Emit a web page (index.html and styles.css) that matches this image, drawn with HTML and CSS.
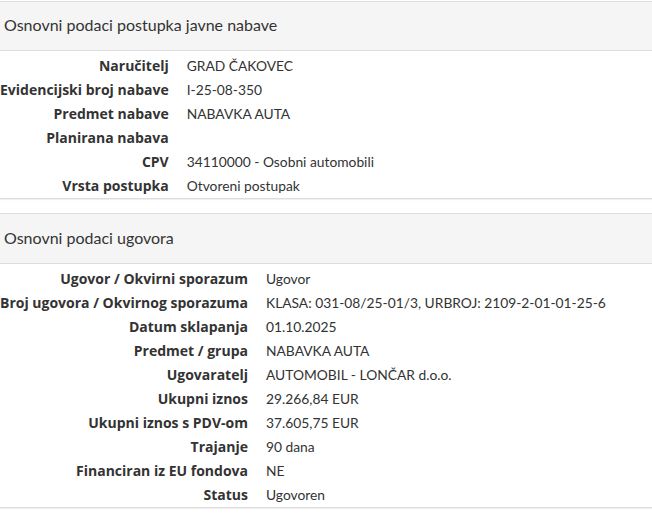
FILE: index.html
```html
<!DOCTYPE html>
<html lang="hr">
<head>
<meta charset="utf-8">
<title>Osnovni podaci</title>
<link rel="stylesheet" href="styles.css">
</head>
<body>
<section class="panel">
  <div class="panel-heading">Osnovni podaci postupka javne nabave</div>
  <table class="details">
    <tr><th>Naručitelj</th><td>GRAD ČAKOVEC</td></tr>
    <tr><th>Evidencijski broj nabave</th><td>I-25-08-350</td></tr>
    <tr><th>Predmet nabave</th><td>NABAVKA AUTA</td></tr>
    <tr><th>Planirana nabava</th><td></td></tr>
    <tr><th>CPV</th><td>34110000 - Osobni automobili</td></tr>
    <tr><th>Vrsta postupka</th><td>Otvoreni postupak</td></tr>
  </table>
</section>
<section class="panel">
  <div class="panel-heading">Osnovni podaci ugovora</div>
  <table class="details">
    <tr><th>Ugovor / Okvirni sporazum</th><td>Ugovor</td></tr>
    <tr><th>Broj ugovora / Okvirnog sporazuma</th><td>KLASA: 031-08/25-01/3, URBROJ: 2109-2-01-01-25-6</td></tr>
    <tr><th>Datum sklapanja</th><td>01.10.2025</td></tr>
    <tr><th>Predmet / grupa</th><td>NABAVKA AUTA</td></tr>
    <tr><th>Ugovaratelj</th><td>AUTOMOBIL - LONČAR d.o.o.</td></tr>
    <tr><th>Ukupni iznos</th><td>29.266,84 EUR</td></tr>
    <tr><th>Ukupni iznos s PDV-om</th><td>37.605,75 EUR</td></tr>
    <tr><th>Trajanje</th><td>90 dana</td></tr>
    <tr><th>Financiran iz EU fondova</th><td>NE</td></tr>
    <tr><th>Status</th><td>Ugovoren</td></tr>
  </table>
</section>
</body>
</html>
```
FILE: styles.css
```css
html, body {
  margin: 0;
  padding: 0;
  background: #fff;
}
body {
  padding-top: 1px;
  font-family: "Lato", "Noto Sans", sans-serif;
  color: #333;
  font-size: 14px;
}
.panel {
  border-top: 1px solid #ddd;
  border-bottom: 1px solid #ddd;
  box-shadow: 0 1px 1px rgba(0,0,0,0.06);
  margin-bottom: 14px;
  background: #fff;
}
.panel-heading {
  background: #f5f5f5;
  border-bottom: 1px solid #ddd;
  height: 49px;
  box-sizing: border-box;
  padding: 0 4px 3px 4px;
  display: flex;
  align-items: center;
  font-size: 16px;
  color: #333;
}
.panel + .panel .panel-heading {
  height: 50px;
}
.details {
  border-collapse: collapse;
  margin: 3px 0 0 0;
}
.details tr {
  height: 24px;
}
.details th {
  text-align: right;
  font-family: "Open Sans", "Noto Sans", sans-serif;
  font-weight: 700;
  font-size: 14px;
  line-height: 24px;
  padding: 0 9px 0 0;
  white-space: nowrap;
  vertical-align: baseline;
}
.details td {
  font-size: 13.8px;
  line-height: 24px;
  padding: 0 0 0 9px;
  white-space: nowrap;
  vertical-align: baseline;
}
```
